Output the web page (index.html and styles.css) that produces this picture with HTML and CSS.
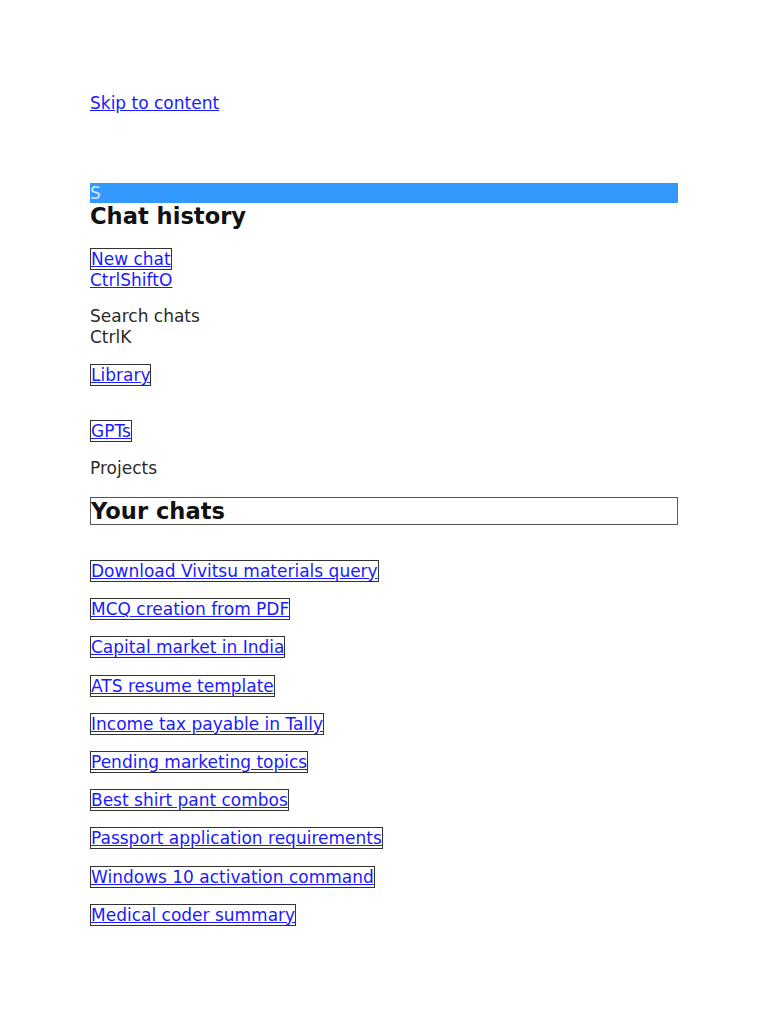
FILE: index.html
```html
<!DOCTYPE html>
<html>
<head>
<meta charset="utf-8">
<link rel="stylesheet" href="styles.css">
</head>
<body>
<div class="page">
  <p class="skip"><a href="#">Skip to content</a></p>
  <div class="bar">S</div>
  <h2 class="title">Chat history</h2>
  <div class="group first">
    <a class="boxed" href="#">New chat</a><br>
    <a href="#">CtrlShiftO</a>
  </div>
  <div class="group search">
    <div>Search chats</div>
    <div>CtrlK</div>
  </div>
  <div class="group library"><a class="boxed" href="#">Library</a></div>
  <div class="group gpts"><a class="boxed" href="#">GPTs</a></div>
  <div class="group projects">Projects</div>
  <h2 class="yours">Your chats</h2>
  <ul class="chats">
    <li><a class="boxed" href="#">Download Vivitsu materials query</a></li>
    <li><a class="boxed" href="#">MCQ creation from PDF</a></li>
    <li><a class="boxed" href="#">Capital market in India</a></li>
    <li><a class="boxed" href="#">ATS resume template</a></li>
    <li><a class="boxed" href="#">Income tax payable in Tally</a></li>
    <li><a class="boxed" href="#">Pending marketing topics</a></li>
    <li><a class="boxed" href="#">Best shirt pant combos</a></li>
    <li><a class="boxed" href="#">Passport application requirements</a></li>
    <li><a class="boxed" href="#">Windows 10 activation command</a></li>
    <li><a class="boxed" href="#">Medical coder summary</a></li>
  </ul>
</div>
</body>
</html>
```
FILE: styles.css
```css
html, body {
  margin: 0;
  padding: 0;
  background: #ffffff;
}
body {
  font-family: "DejaVu Sans", sans-serif;
  font-size: 17px;
  line-height: 21px;
  color: #2a2a2a;
}
a {
  color: #1a1aff;
  text-decoration: underline;
}
.page {
  width: 588px;
  margin: 0 auto;
  padding-top: 93px;
}
.skip {
  margin: 0 0 69px 0;
}
.bar {
  background: #3399ff;
  color: #d6e8ff;
  height: 20px;
  line-height: 20px;
}
.title {
  margin: 0;
  font-size: 22.6px;
  line-height: 26px;
  font-weight: bold;
  color: #111111;
}
.boxed {
  border: 1px solid #333333;
}
.group {
  margin: 18px 0 0 0;
}
.group.first {
  margin-top: 20px;
}
.group.search {
  margin-top: 15px;
}
.group.library {
  margin-top: 17px;
}
.gpts {
  margin-top: 35px;
}
.group.projects {
  margin-top: 16px;
}
.yours {
  margin: 18px 0 0 0;
  border: 1px solid #555555;
  font-size: 22.6px;
  line-height: 26px;
  font-weight: bold;
  color: #111111;
}
.chats {
  list-style: none;
  margin: 36px 0 0 0;
  padding: 0;
}
.chats li {
  margin-bottom: 17.2px;
}
```
